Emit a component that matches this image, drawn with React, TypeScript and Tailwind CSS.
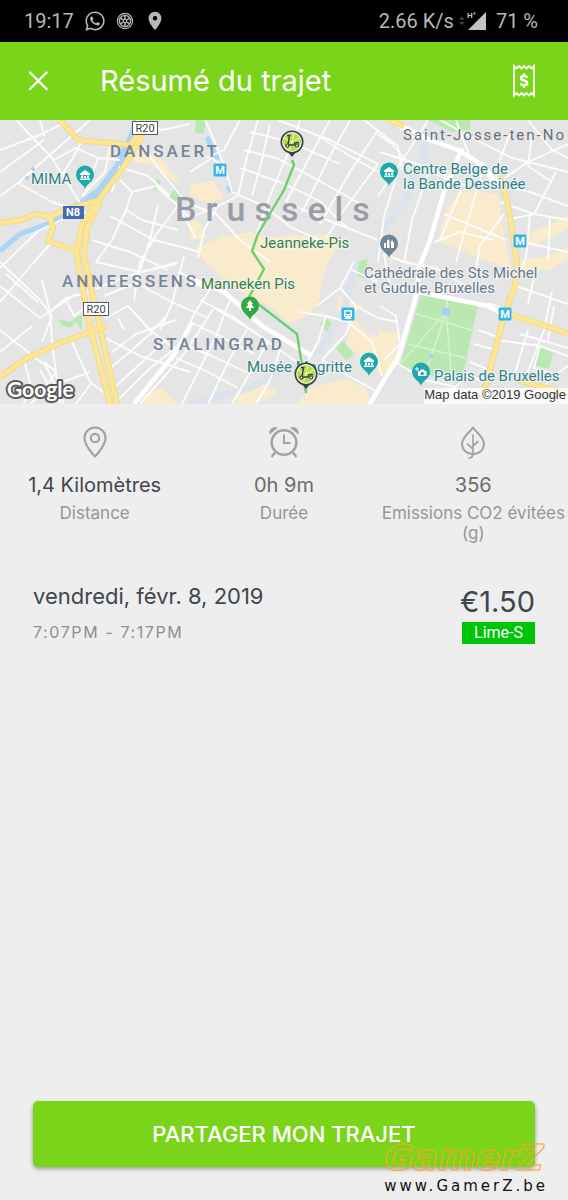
import React from 'react';
import { FaWhatsapp } from 'react-icons/fa';
import { MdLocationOn } from 'react-icons/md';

interface Stat {
  id: string;
  value: string;
  label: string;
  valueClass: string;
  icon: React.ReactNode;
}

interface Pin {
  x: number;
  y: number;
  color: string;
  kind: 'museum' | 'church' | 'tree' | 'camera';
}

const WheelIcon = () => (
  <svg viewBox="0 0 18 18" className="w-[18px] h-[18px]" fill="none" stroke="currentColor" aria-hidden="true">
    <circle cx="9" cy="9" r="7.6" strokeWidth="1.2" />
    <circle cx="9" cy="9" r="5.6" strokeWidth="1.3" />
    <circle cx="9" cy="9" r="1.6" strokeWidth="1" />
    <path d="M9 3.4V7.4M9 10.6V14.6M4.2 6.2L7.6 8.2M10.4 9.8L13.8 11.8M4.2 11.8L7.6 9.8M10.4 8.2L13.8 6.2" strokeWidth="1.5" />
  </svg>
);

const SignalIcon = () => (
  <svg viewBox="0 0 30 20" className="w-[30px] h-5" aria-hidden="true">
    <path d="M1 8.5L3.8 5.5L6.6 8.5ZM1 11L3.8 14L6.6 11Z" fill="#444" />
    <path d="M28 1V19H10Z" fill="#c4c4c4" />
    <text x="9" y="7" className="text-[8px] font-bold font-['Roboto',sans-serif]" fill="#c4c4c4">
      H⁺
    </text>
  </svg>
);

const CloseIcon = () => (
  <svg viewBox="0 0 20 20" className="w-5 h-5" fill="none" stroke="currentColor" strokeWidth="2.4" strokeLinecap="round" aria-hidden="true">
    <path d="M2 1.5L18.5 18M18.5 1.5L2 18" />
  </svg>
);

const ReceiptIcon = () => (
  <svg viewBox="0 0 24 34" className="w-6 h-[34px]" fill="none" stroke="currentColor" strokeWidth="1.8" aria-hidden="true">
    <path d="M2 2L4.5 4.5L7 2L9.5 4.5L12 2L14.5 4.5L17 2L19.5 4.5L22 2V31.5L19.5 29L17 31.5L14.5 29L12 31.5L9.5 29L7 31.5L4.5 29L2 31.5Z" />
    <path d="M15.2 13.6C14.6 12.4 13.5 12 12 12C10.2 12 9 12.8 9 14.2C9 17.4 15.2 15.6 15.2 19C15.2 20.5 13.8 21.3 12 21.3C10.3 21.3 9.1 20.7 8.6 19.4M12 9.5V12M12 21.3V24" strokeWidth="2.4" />
  </svg>
);

const DistanceIcon = () => (
  <svg viewBox="0 0 32 32" className="w-8 h-8" fill="none" stroke="currentColor" strokeWidth="2.2" strokeLinejoin="round" aria-hidden="true">
    <path d="M16 30.5C14 28.5 5.5 19 5.5 12A10.5 10.5 0 0 1 26.5 12C26.5 19 18 28.5 16 30.5Z" />
    <circle cx="16" cy="12" r="4.2" />
  </svg>
);

const AlarmIcon = () => (
  <svg viewBox="0 0 32 32" className="w-8 h-8" fill="none" stroke="currentColor" strokeWidth="2.6" aria-hidden="true">
    <circle cx="16" cy="16.5" r="12.3" />
    <path d="M16 8.5V17H22.5" strokeWidth="2" />
    <path d="M7 26.5L3.5 31M25 26.5L28.5 31" strokeWidth="2.2" />
    <path d="M1.6 8.6C0 4 5 -1 10 1.6ZM30.4 8.6C32 4 27 -1 22 1.6Z" fill="currentColor" stroke="none" />
  </svg>
);

const LeafIcon = () => (
  <svg viewBox="0 0 32 34" className="w-8 h-[34px]" fill="none" stroke="currentColor" strokeWidth="2" strokeLinecap="round" strokeLinejoin="round" aria-hidden="true">
    <path d="M16 1.5C14 5 5 11 5 18C5 24 10 28 16 28C22 28 27 24 27 18C27 11 18 5 16 1.5Z" />
    <path d="M16 9V27C16 30 15 32 12 32M16 23L10.5 18M16 20L21 15.5" strokeWidth="1.7" />
  </svg>
);

const stats: Stat[] = [
  { id: 'distance', value: '1,4 Kilomètres', label: 'Distance', valueClass: 'text-[#41454f]', icon: <DistanceIcon /> },
  { id: 'duration', value: '0h 9m', label: 'Durée', valueClass: 'text-[#6c6c6c]', icon: <AlarmIcon /> },
  { id: 'co2', value: '356', label: 'Emissions CO2 évitées (g)', valueClass: 'text-[#6c6c6c]', icon: <LeafIcon /> },
];

const sandAreas = [
  'M190 185L213 180L224 198L208 203L190 196Z',
  'M222 236L252 232L262 237L325 234L338 246L328 262L322 280L318 305L306 316L290 324L268 305L247 297L232 285L206 264L196 248Z',
  'M131 150L142 146L164 162L180 184L174 182L152 165L134 162Z',
  'M188 214L198 222L208 238L190 240Z',
  'M461 190L498 194L505 241L512 270L490 262L438 241L447 208Z',
  'M525 235L568 216V229L530 247Z',
  'M516 262L546 256L568 248V260L548 270L520 274Z',
  'M352 318L372 336L398 334L396 362L382 376L362 358L346 344Z',
  'M338 296L362 306L352 318L336 310Z',
  'M296 404L312 388L345 378L366 388L372 404Z',
  'M142 396L162 388L178 404H138Z',
  'M236 392L262 384L278 392L256 404H236Z',
  'M378 330L398 332L396 352L384 350Z',
];

const greenAreas = [
  'M421 294L478 305L461 384L400 366Z',
  'M540 347L553 352L549 369L534 365Z',
  'M196 120H207L203 134L195 132Z',
  'M428 120H470V130L452 132Z',
  'M157 179L161 181L157 190L152 188Z',
  'M175 189L182 196L175 201L169 197Z',
  'M326 318L334 324L328 333L320 324Z',
  'M343 341L354 354L346 360L336 348Z',
  'M358 262L368 258L364 278L357 276Z',
  'M58 319L70 322L82 314V331L76 322L70 328L62 325Z',
];

const minorRoads = [
  'M0 150L40 135L66 122M0 172L44 140M16 120L52 158L82 206M0 196L18 183L52 202L88 214M18 183L60 146L90 120',
  'M54 160L76 148L98 158L120 160M82 140L74 156L60 178M98 158L84 196M110 146L105 172L82 196M0 268L38 231L72 215',
  'M0 302L34 262L54 240M0 286L40 318L76 294M0 262L40 300L52 316L42 342M40 120L44 136M120 166L112 192',
  'M120 180L132 192L126 210L142 220L178 230M126 210L112 240L96 262M132 192L156 186L178 206L196 238',
  'M142 145L160 170L184 200M122 168L148 176L170 196M158 205L150 240L140 270M178 206L158 232L140 262L134 300',
  'M92 240L130 252L168 270M96 262L140 272L176 264M110 216L154 240L200 252M136 120L162 130L190 124M92 290L128 276L178 262',
  'M104 296L136 283L172 302L208 318M106 318L128 306L150 330L176 350M118 318L124 330M106 338L140 356L190 372M112 352L136 334L176 320',
  'M108 370L132 350L152 332L168 314M114 388L142 362L166 340M118 400L148 370L178 346L190 330M140 404L184 354L214 308',
  'M60 404L52 342L50 312M24 404L30 382L24 360M0 330L46 366L64 404M72 342L90 382L106 394M92 382L76 404M44 362L56 372L48 384L40 370',
  'M66 300L74 316L90 304M42 280L50 312L66 298L90 292M0 352L32 326M6 274L38 302M30 404L52 386L90 372',
  'M205 120L214 140L226 170L232 192M240 120L224 150L206 158M258 120L246 160L238 196L218 206M270 124L262 160L252 196',
  'M278 120L330 140L378 164M250 132L290 142L340 164M244 150L276 158L318 180L368 208M240 168L280 182L318 200L350 230',
  'M330 120L308 160L286 202M350 120L330 156L302 212M378 130L350 172L320 224M378 164L344 210L326 238M318 136L350 156L378 172',
  'M190 172L212 158L226 170M232 192L264 206L292 228L320 240M218 206L190 218L176 204M190 204L216 214L240 240L270 262',
  'M300 120L292 144L270 196L256 236M364 120L398 146L402 170M286 202L322 218L378 240M218 206L204 230L198 258',
  'M178 272L212 286L248 310M184 256L172 304L160 330M212 286L194 314L182 344M214 308L248 328L280 350L302 366',
  'M200 300L232 316L268 342M190 322L220 336L254 354M182 344L212 356L246 372M176 358L204 370L238 388M230 300L216 336L198 372L182 404',
  'M248 328L228 362L208 404M268 342L254 366L232 404M280 350L270 380L256 404M300 312L326 316L348 322M318 305L340 288L354 262',
  'M340 288L356 306L378 318L398 322M356 306L346 334L322 360M348 322L372 342L382 376M322 360L352 378L378 392M326 316L318 342L308 360',
  'M378 196L404 158L428 120M380 152L430 168L470 188M404 158L392 144L378 134M398 172L384 216L378 262M430 168L412 220L404 262',
  'M390 120L410 136L456 148L484 166L494 190M440 120L480 142L512 158L568 172M456 120L470 158M512 128L500 160L496 184M532 134L528 166L552 182',
  'M496 184L530 192L568 206M500 202L534 214L568 220M496 184L528 162L568 144M528 120L552 150L568 158M506 220L534 214L556 172',
  'M444 214L506 240M461 190L440 240M484 166L468 220L456 262M430 172L462 186M504 214L480 246L472 290M434 242L460 232L494 240',
  'M514 240L568 252M530 214L526 258L518 276M550 216L548 260M516 286L568 304M534 278L528 304M552 292L544 330L524 382M534 344L568 356',
  'M520 334L568 348M528 330L514 376M498 340L540 346M506 310L492 304L478 304M478 330L500 338M474 344L496 350M470 362L490 370M450 392L470 374L482 382',
  'M384 254L390 286L420 292M378 282L352 270M384 254L404 262L436 268L472 290M380 306L396 316L400 344L384 360M396 362L424 380L452 386L468 404',
  'M554 306L548 340M568 366L548 380L540 404M540 346L534 368L560 376',
];

const majorRoads = [
  'M420 268L415 300L398 358L384 380L370 404',
  'M462 148L444 192L430 240L418 270',
  'M398 124L430 140L458 150L484 166L496 182',
  'M418 292L488 306L510 318',
  'M190 282L222 290L262 326L312 356',
  'M134 404L176 352L192 322',
];

const yellowRoads = [
  'M0 223L20 220L37 214L50 217L64 210L97 201',
  'M50 217L53 228L48 241L78 251',
  'M143 120L142 136L123 168L100 198L82 224L77 250L78 264L90 327L110 404',
  'M100 201L87 228L84 256L90 282L100 327L117 404',
  'M60 120L78 140L130 145L140 132',
  'M0 377L27 358L60 343L90 332L107 326',
  'M500 176L508 205L517 262L516 282L503 320L488 377L480 404',
  'M511 315L540 324L568 334',
  'M518 380L568 394',
  'M388 120L404 126',
];

const pins: Pin[] = [
  { x: 85, y: 176, color: '#1fa9ae', kind: 'museum' },
  { x: 389, y: 173, color: '#1fa9ae', kind: 'museum' },
  { x: 389, y: 245, color: '#6f8798', kind: 'church' },
  { x: 250, y: 307, color: '#34a844', kind: 'tree' },
  { x: 369, y: 363, color: '#1fa9ae', kind: 'museum' },
  { x: 421, y: 373, color: '#1fa9ae', kind: 'camera' },
];

const pinGlyphs = {
  museum: 'M-5 -1.5L0 -5L5 -1.5V0H-5ZM-4 0.5H-2V4H-4ZM-1 1H1V4H-1ZM2 0.5H4V4H2ZM-5 3.5H5V5H-5Z',
  church: 'M-5 4V-1H-3V4ZM-2 4V-3L-0.5 -5L0.5 -3V4ZM2 4V-2L3 -4L5 -1V4Z',
  tree: 'M0 -6L3 -2H1.5L4 2H1V5H-1V2H-4L-1.5 -2H-3Z',
  camera:
    'M-3 -1H-1L0 -2.5H3L4 -1H5.5V4H-3ZM1.2 -0.2A1.7 1.7 0 1 0 1.3 -0.2ZM-4.5 -5H-3.5V-3.5H-2V-2.5H-3.5V-1H-4.5V-2.5H-6V-3.5H-4.5Z',
};

const metros = [
  { x: 220, y: 170 },
  { x: 520, y: 241 },
  { x: 505, y: 314 },
];

const MapPin = ({ x, y, color, kind }: Pin) => (
  <g transform={`translate(${x} ${y})`}>
    <path d="M0 13C-1 8 -9 6 -9 -1.5A9 9 0 0 1 9 -1.5C9 6 1 8 0 13Z" fill={color} />
    <path d={pinGlyphs[kind]} fill="#fff" fillRule="evenodd" transform="translate(0 -1)" />
  </g>
);

const ScooterMarker = ({ x, y }: { x: number; y: number }) => (
  <g transform={`translate(${x} ${y})`}>
    <path d="M-5 9L0 15L5 9Z" fill="#3c3f46" />
    <circle r="10.7" fill="#fff" stroke="#3c3f46" strokeWidth="1.6" />
    <circle r="9" fill="#b5df45" />
    <path d="M0 0L-8 -4M0 0L2 -9M0 0L8 -4M0 0L-3 9M0 0L6 7" stroke="#e9f7c4" strokeWidth="1" fill="none" />
    <path d="M-5 -6.5H-1.5M-2.5 -6.5L-4 3L2 3C2 0.5 4 0 7 1" stroke="#3c3f46" strokeWidth="1.5" fill="none" />
    <circle cx="-4.5" cy="3.5" r="1.5" fill="#fff" stroke="#3c3f46" strokeWidth="1.2" />
    <circle cx="5" cy="3.5" r="1.5" fill="#fff" stroke="#3c3f46" strokeWidth="1.2" />
  </g>
);

const RoadShield = ({ x, y, label }: { x: number; y: number; label: string }) => (
  <g>
    <rect x={x - 12.5} y={y - 6.5} width="25" height="13" fill="#fff" stroke="#55585c" />
    <text x={x} y={y + 4} textAnchor="middle" fill="#444" className="text-[11px]">
      {label}
    </text>
  </g>
);

const TripMap = () => (
  <svg viewBox="0 120 568 284" className="block w-full h-auto font-['Roboto',sans-serif]" role="img" aria-label="Trajet à Bruxelles">
    <rect y="120" width="568" height="284" fill="#e5e5e5" />
    <g fill="#f9ebcb">
      {sandAreas.map((d) => (
        <path key={d} d={d} />
      ))}
    </g>
    <g fill="#b9e8b0">
      {greenAreas.map((d) => (
        <path key={d} d={d} />
      ))}
    </g>
    <g fill="none" stroke="#d6f2cf" strokeWidth="1.5">
      <path d="M446 312L402 362M446 312L428 366M446 312L452 380M448 296L446 312M416 314L472 330M408 344L466 358" />
    </g>
    <g fill="none" stroke="#dde3ec" strokeWidth="7">
      <path d="M378 236L404 204L420 160L432 124M356 262L344 310L320 350L250 388L190 404M394 126L426 140L424 170" />
    </g>
    <g fill="none" stroke="#aad4f8">
      <path d="M137 120L133 135L117 168L100 191L80 205L62 216" strokeWidth="8" />
      <path d="M62 216L50 223L20 234L0 251" strokeWidth="5" />
      <path d="M207 137L218 160M228 186L231 192" strokeWidth="5" />
    </g>
    <g fill="none" stroke="#fcfcfc" strokeWidth="1.9" strokeLinejoin="round">
      {minorRoads.map((d) => (
        <path key={d} d={d} />
      ))}
    </g>
    <g fill="none" stroke="#fff" strokeWidth="4.5" strokeLinejoin="round">
      {majorRoads.map((d) => (
        <path key={d} d={d} />
      ))}
    </g>
    <g fill="none" stroke="#efd488" strokeWidth="6" strokeLinejoin="round">
      {yellowRoads.map((d) => (
        <path key={d} d={d} />
      ))}
    </g>
    <g fill="none" stroke="#fde693" strokeWidth="4.5" strokeLinejoin="round">
      {yellowRoads.map((d) => (
        <path key={d} d={d} />
      ))}
    </g>
    <g fill="#a3cffa">
      <circle cx="446" cy="312" r="4" />
      <circle cx="431" cy="356" r="2.2" />
      <circle cx="33" cy="169" r="2" />
      <circle cx="27" cy="178" r="2" />
    </g>

    <g fill="#75849a" className="text-[17px] font-medium tracking-[3px]">
      <text x="110" y="157">DANSAERT</text>
      <text x="62" y="287">ANNEESSENS</text>
      <text x="153" y="350">STALINGRAD</text>
    </g>
    <text x="175" y="221" fill="#9a9da8" className="text-[34px] font-medium tracking-[9px]">
      Brussels
    </text>
    <text x="403" y="140" fill="#686f7c" className="text-[15px] tracking-[2px]">
      Saint-Josse-ten-No
    </text>

    <path d="M292 160L294 165L284 190L268 217L258 234L252 251L264 269L249 297L297 334L304 378L306 393" fill="none" stroke="#6bd06b" strokeWidth="2.4" strokeLinejoin="round" />

    <g stroke="#f4f4f4" strokeWidth="2" className="text-[15px] [paint-order:stroke]">
      <g fill="#2c8288">
        <text x="31" y="184">MIMA</text>
        <text x="403" y="174">Centre Belge de</text>
        <text x="403" y="189">la Bande Dessinée</text>
        <text x="247" y="372">Musée Magritte</text>
        <text x="434" y="381">Palais de Bruxelles</text>
      </g>
      <g fill="#397f3c">
        <text x="260" y="248">Jeanneke-Pis</text>
        <text x="201" y="289">Manneken Pis</text>
      </g>
      <g fill="#66788a">
        <text x="364" y="278">Cathédrale des Sts Michel</text>
        <text x="364" y="293">et Gudule, Bruxelles</text>
      </g>
    </g>

    <RoadShield x={145} y={128} label="R20" />
    <RoadShield x={96} y={309} label="R20" />
    <rect x="63" y="206" width="21" height="13" fill="#3f6cb5" />
    <text x="73" y="216" textAnchor="middle" fill="#fff" className="text-[11px] font-bold">N8</text>

    {metros.map(({ x, y }) => (
      <g key={x}>
        <rect x={x - 6.5} y={y - 6.5} width="13" height="13" rx="1.5" fill="#35b5ea" />
        <text x={x} y={y + 4} textAnchor="middle" fill="#fff" className="text-[11px] font-bold">M</text>
      </g>
    ))}
    <g transform="translate(348 314)">
      <rect x="-6.5" y="-6.5" width="13" height="13" rx="1.5" fill="#35b5ea" />
      <path d="M-4 -4H4V3H-4ZM-4 5L-2 3H2L4 5Z" fill="#fff" />
      <path d="M-2.5 -2.5H2.5V0H-2.5ZM-2.5 1H-1V2H-2.5ZM1 1H2.5V2H1Z" fill="#35b5ea" />
    </g>

    {pins.map((pin) => (
      <MapPin key={`${pin.x}-${pin.y}`} {...pin} />
    ))}
    <ScooterMarker x={292} y={142} />
    <ScooterMarker x={306} y={374} />

    <text x="7" y="397" fill="#fff" stroke="#5a5a5a" strokeWidth="4" strokeLinejoin="round" className="text-[21px] font-bold font-['Lato',sans-serif] [paint-order:stroke]">
      Google
    </text>
    <rect x="424" y="388" width="144" height="16" fill="#fff" fillOpacity="0.75" />
    <text x="566" y="399" textAnchor="end" fill="#333" className="text-[13px] font-['Liberation_Sans',sans-serif]">
      Map data ©2019 Google
    </text>
  </svg>
);

const App: React.FC = () => {
  return (
    <div className="relative flex flex-col min-h-screen bg-[#eeeeee] font-['Inter',sans-serif]">
      <div className="flex items-center justify-between h-[42px] pl-6 pr-[30px] bg-black text-[#b8b8b8] text-xl font-['Roboto',sans-serif]">
        <div className="flex items-center gap-2.5">
          <span>19:17</span>
          <FaWhatsapp className="w-[22px] h-[22px]" />
          <WheelIcon />
          <MdLocationOn className="w-[22px] h-[22px]" />
        </div>
        <div className="flex items-center gap-2">
          <div className="flex items-center gap-1">
            <span>2.66 K/s</span>
            <SignalIcon />
          </div>
          <span>71 %</span>
        </div>
      </div>

      <header className="flex items-center h-[78px] pl-7 pr-8 bg-[#7ad51a] text-white">
        <button type="button" aria-label="Fermer">
          <CloseIcon />
        </button>
        <h1 className="ml-13 text-[29px] leading-8">Résumé du trajet</h1>
        <button type="button" aria-label="Reçu" className="ml-auto">
          <ReceiptIcon />
        </button>
      </header>

      <TripMap />

      <main className="flex flex-col grow">
        <section className="grid grid-cols-3 pt-[22px] text-center">
          {stats.map((stat) => (
            <div key={stat.id} className="flex flex-col items-center">
              <div className="h-8 text-[#a3a3a3]">{stat.icon}</div>
              <p className={`mt-[13px] text-xl leading-7 ${stat.valueClass}`}>{stat.value}</p>
              <p className="mt-1 text-[17px] leading-5 text-[#969696]">{stat.label}</p>
            </div>
          ))}
        </section>

        <section className="flex justify-between px-[33px] mt-[39px]">
          <div>
            <p className="text-[22px] leading-7 text-[#41454f]">vendredi, févr. 8, 2019</p>
            <p className="mt-3 text-base leading-5 tracking-widest text-[#8f8f8f]">7:07PM - 7:17PM</p>
          </div>
          <div className="flex flex-col items-end pt-1">
            <p className="text-[29px] leading-8 text-[#41454f]">€1.50</p>
            <span className="px-3 mt-1 text-base leading-[22px] bg-[#00c40a] text-white font-['Roboto',sans-serif]">
              Lime-S
            </span>
          </div>
        </section>

        <div className="px-[33px] pb-[33px] mt-auto">
          <button type="button" className="w-full h-[66px] rounded-[5px] bg-[#7ad51a] text-white text-[22px] font-medium shadow-[0_2px_4px_rgba(0,0,0,0.35)]">
            PARTAGER MON TRAJET
          </button>
        </div>
      </main>

      <div className="absolute right-5 bottom-1 flex flex-col items-start font-['DejaVu_Sans',sans-serif] pointer-events-none">
        <span className="text-4xl leading-9 font-bold italic text-transparent [-webkit-text-stroke:1px_#ff9f2e]">GamerZ</span>
        <span className="text-[15px] leading-5 tracking-[3px] text-[#111]">www.GamerZ.be</span>
      </div>
    </div>
  );
};

export default App;
